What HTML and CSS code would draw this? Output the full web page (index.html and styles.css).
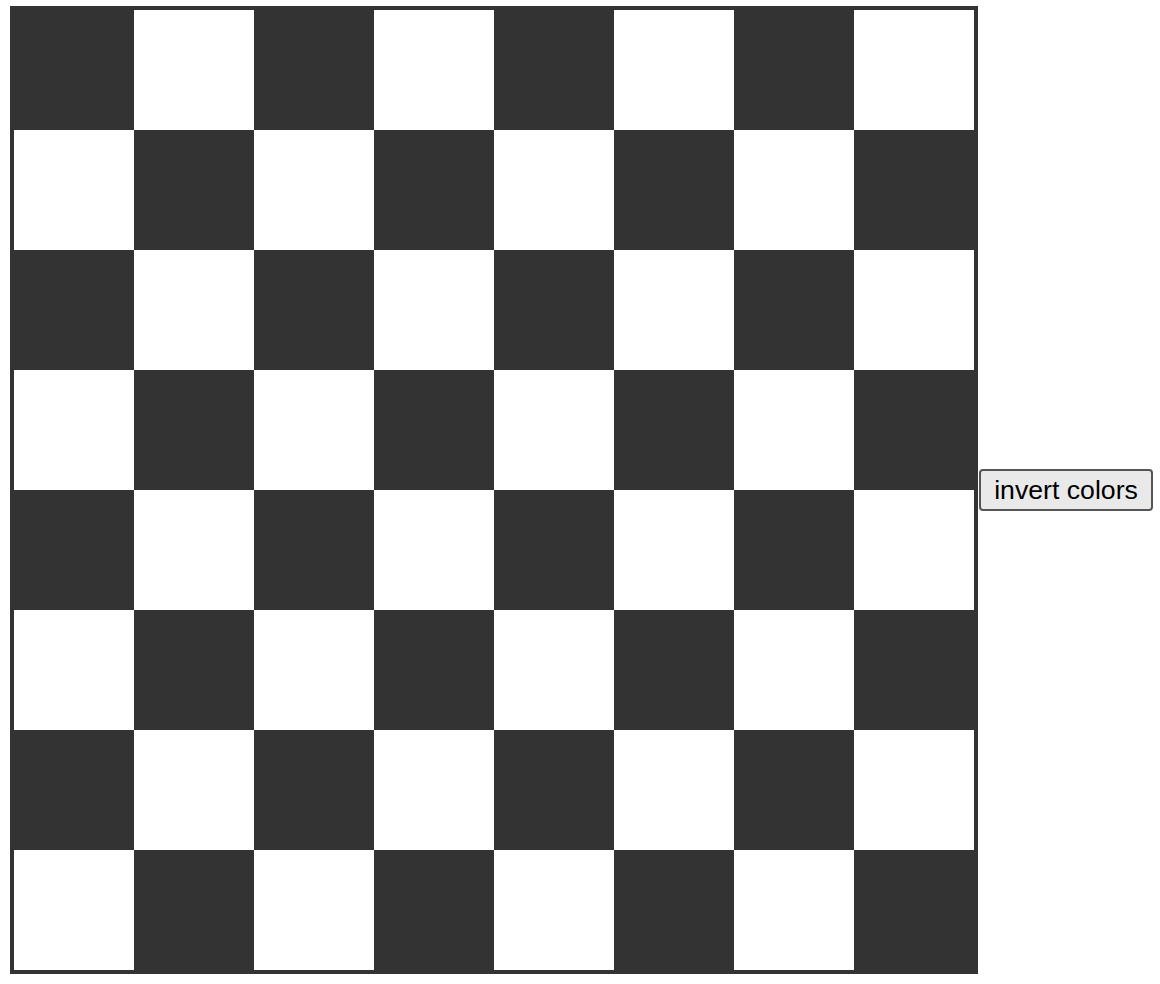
FILE: index.html
```html
<!DOCTYPE html>
<html>
<head>
<meta charset="utf-8">
<link rel="stylesheet" href="styles.css">
</head>
<body>
<div class="page">
  <div class="board">
    <div class="cell d"></div><div class="cell"></div><div class="cell d"></div><div class="cell"></div><div class="cell d"></div><div class="cell"></div><div class="cell d"></div><div class="cell"></div>
    <div class="cell"></div><div class="cell d"></div><div class="cell"></div><div class="cell d"></div><div class="cell"></div><div class="cell d"></div><div class="cell"></div><div class="cell d"></div>
    <div class="cell d"></div><div class="cell"></div><div class="cell d"></div><div class="cell"></div><div class="cell d"></div><div class="cell"></div><div class="cell d"></div><div class="cell"></div>
    <div class="cell"></div><div class="cell d"></div><div class="cell"></div><div class="cell d"></div><div class="cell"></div><div class="cell d"></div><div class="cell"></div><div class="cell d"></div>
    <div class="cell d"></div><div class="cell"></div><div class="cell d"></div><div class="cell"></div><div class="cell d"></div><div class="cell"></div><div class="cell d"></div><div class="cell"></div>
    <div class="cell"></div><div class="cell d"></div><div class="cell"></div><div class="cell d"></div><div class="cell"></div><div class="cell d"></div><div class="cell"></div><div class="cell d"></div>
    <div class="cell d"></div><div class="cell"></div><div class="cell d"></div><div class="cell"></div><div class="cell d"></div><div class="cell"></div><div class="cell d"></div><div class="cell"></div>
    <div class="cell"></div><div class="cell d"></div><div class="cell"></div><div class="cell d"></div><div class="cell"></div><div class="cell d"></div><div class="cell"></div><div class="cell d"></div>
  </div>
  <button class="invert">invert colors</button>
</div>
</body>
</html>
```
FILE: styles.css
```css
html, body {
  margin: 0;
  padding: 0;
  background: #fff;
}
.page {
  display: flex;
  align-items: center;
  padding: 6px 0 0 10px;
}
.board {
  display: grid;
  grid-template-columns: repeat(8, 120px);
  grid-template-rows: repeat(8, 120px);
  border: 4px solid #333;
  flex: none;
}
.cell {
  background: #fff;
}
.cell.d {
  background: #333;
}
.invert {
  margin-left: 1px;
  width: 174px;
  height: 42px;
  font-family: "Liberation Sans", Arial, sans-serif;
  font-size: 26.67px;
  color: #000;
  background: #e9e9e9;
  border: 2px solid #555;
  border-radius: 4px;
  padding: 0;
}
```
